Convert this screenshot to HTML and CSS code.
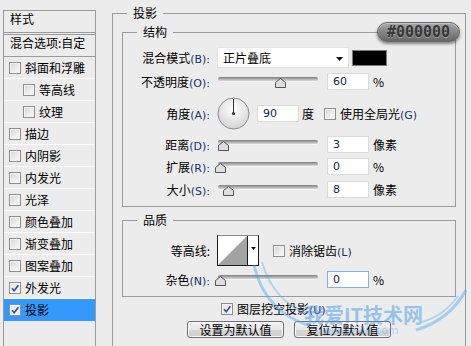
FILE: index.html
```html
<!DOCTYPE html>
<html lang="zh-CN">
<head>
<meta charset="utf-8">
<title>图层样式 - 投影</title>
<link rel="stylesheet" href="styles.css">
</head>
<body>
<div class="dialog">
  <aside class="styles">
    <div class="styles-head">样式</div>
    <div class="styles-blend">混合选项:自定</div>
    <ul class="fx-list">
      <li class="fx"><span class="cb"></span>斜面和浮雕</li>
      <li class="fx sub"><span class="cb"></span>等高线</li>
      <li class="fx sub"><span class="cb"></span>纹理</li>
      <li class="fx"><span class="cb"></span>描边</li>
      <li class="fx"><span class="cb"></span>内阴影</li>
      <li class="fx"><span class="cb"></span>内发光</li>
      <li class="fx"><span class="cb"></span>光泽</li>
      <li class="fx"><span class="cb"></span>颜色叠加</li>
      <li class="fx"><span class="cb"></span>渐变叠加</li>
      <li class="fx"><span class="cb"></span>图案叠加</li>
      <li class="fx"><span class="cb on"><svg viewBox="0 0 10 10" width="10" height="10"><path d="M2 5.2 L4.2 7.8 L8.4 2.2" fill="none" stroke="#2f4fa8" stroke-width="1.6"/></svg></span>外发光</li>
      <li class="fx sel"><span class="cb on"><svg viewBox="0 0 10 10" width="10" height="10"><path d="M2 5.2 L4.2 7.8 L8.4 2.2" fill="none" stroke="#2f4fa8" stroke-width="1.6"/></svg></span>投影</li>
    </ul>
  </aside>

  <section class="main">
    <fieldset class="group outer">
      <legend>投影</legend>

      <fieldset class="group inner">
        <legend>结构</legend>

        <div class="row r-blend">
          <span class="lbl">混合模式<span class="acc">(B):</span></span>
          <div class="select">正片叠底<svg class="sel-arrow" viewBox="0 0 7 4" width="7" height="4"><path d="M0 0 H7 L3.5 4 Z" fill="#111"/></svg></div>
          <span class="swatch"></span>
        </div>

        <div class="row r-gap5">
          <span class="lbl">不透明度<span class="acc">(O):</span></span>
          <div class="slider"><span class="track"></span><svg class="thumb" style="left:60px" viewBox="0 0 11 10" width="11" height="10"><path d="M0.5 9.5 V4.5 L5.5 0.5 L10.5 4.5 V9.5 Z" fill="#dedede" stroke="#555"/></svg></div>
          <input class="num" type="text" value="60">
          <span class="unit">%</span>
        </div>

        <div class="row r-angle">
          <span class="lbl">角度<span class="acc">(A):</span></span>
          <svg class="dial" viewBox="0 0 33 33" width="33" height="33">
            <defs><radialGradient id="dg" cx="50%" cy="35%" r="65%"><stop offset="0" stop-color="#ffffff"/><stop offset="1" stop-color="#d4d4d4"/></radialGradient></defs>
            <circle cx="16.5" cy="16.5" r="15.5" fill="url(#dg)" stroke="#8c8c8c"/>
            <line x1="16.5" y1="16.5" x2="16.5" y2="2" stroke="#333" stroke-width="1"/>
            <circle cx="16.5" cy="16.5" r="1.6" fill="#333"/>
          </svg>
          <input class="num" type="text" value="90">
          <span class="unit deg">度</span>
          <span class="cb global"></span>
          <span class="cb-text">使用全局光<span class="acc">(G)</span></span>
        </div>

        <div class="row r-gap6">
          <span class="lbl">距离<span class="acc">(D):</span></span>
          <div class="slider"><span class="track"></span><svg class="thumb" style="left:3px" viewBox="0 0 11 10" width="11" height="10"><path d="M0.5 9.5 V4.5 L5.5 0.5 L10.5 4.5 V9.5 Z" fill="#dedede" stroke="#555"/></svg></div>
          <input class="num" type="text" value="3">
          <span class="unit">像素</span>
        </div>

        <div class="row r-gap5">
          <span class="lbl">扩展<span class="acc">(R):</span></span>
          <div class="slider"><span class="track"></span><svg class="thumb" style="left:0px" viewBox="0 0 11 10" width="11" height="10"><path d="M0.5 9.5 V4.5 L5.5 0.5 L10.5 4.5 V9.5 Z" fill="#dedede" stroke="#555"/></svg></div>
          <input class="num" type="text" value="0">
          <span class="unit">%</span>
        </div>

        <div class="row r-gap6">
          <span class="lbl">大小<span class="acc">(S):</span></span>
          <div class="slider"><span class="track"></span><svg class="thumb" style="left:8px" viewBox="0 0 11 10" width="11" height="10"><path d="M0.5 9.5 V4.5 L5.5 0.5 L10.5 4.5 V9.5 Z" fill="#dedede" stroke="#555"/></svg></div>
          <input class="num" type="text" value="8">
          <span class="unit">像素</span>
        </div>
      </fieldset>

      <fieldset class="group inner quality">
        <legend>品质</legend>

        <div class="row r-contour">
          <span class="lbl">等高线:</span>
          <div class="contour">
            <svg class="curve" viewBox="0 0 29 29" width="29" height="29"><rect width="29" height="29" fill="#fff"/><path d="M0 29 L29 0 V29 Z" fill="#a3a3a3"/></svg>
            <span class="c-arrow"><svg viewBox="0 0 5 3" width="5" height="3"><path d="M0 0 H5 L2.5 3 Z" fill="#111"/></svg></span>
          </div>
          <span class="cb anti"></span>
          <span class="cb-text">消除锯齿<span class="acc">(L)</span></span>
        </div>

        <div class="row r-gap5">
          <span class="lbl">杂色<span class="acc">(N):</span></span>
          <div class="slider"><span class="track"></span><svg class="thumb" style="left:0px" viewBox="0 0 11 10" width="11" height="10"><path d="M0.5 9.5 V4.5 L5.5 0.5 L10.5 4.5 V9.5 Z" fill="#dedede" stroke="#555"/></svg></div>
          <input class="num focus" type="text" value="0">
          <span class="unit">%</span>
        </div>
      </fieldset>

      <div class="knockout">
        <span class="cb on"><svg viewBox="0 0 10 10" width="10" height="10"><path d="M2 5.2 L4.2 7.8 L8.4 2.2" fill="none" stroke="#2f4fa8" stroke-width="1.6"/></svg></span>
        <span class="cb-text">图层挖空投影<span class="acc">(U)</span></span>
      </div>

      <div class="buttons">
        <button class="btn" type="button">设置为默认值</button>
        <button class="btn" type="button">复位为默认值</button>
      </div>
    </fieldset>
  </section>

  <div class="badge">#000000</div>

  <div class="watermark">
    <svg class="wings" viewBox="0 0 231 126" width="231" height="126">
      <path d="M14 45 C22 80 45 98 70 106" fill="none" stroke="#4aa8ee" stroke-width="3" opacity="0.45"/>
      <path d="M22 42 C30 70 48 86 66 94" fill="none" stroke="#4aa8ee" stroke-width="2" opacity="0.35"/>
      <path d="M226 70 C214 92 196 104 176 110" fill="none" stroke="#4aa8ee" stroke-width="3" opacity="0.45"/>
      <path d="M218 76 C208 90 196 98 182 102" fill="none" stroke="#4aa8ee" stroke-width="2" opacity="0.35"/>
    </svg>
    <span class="wm-title">我爱IT技术网</span>
    <span class="wm-url">www.52ij.com</span>
  </div>
</div>
</body>
</html>
```

FILE: styles.css
```css
html, body {
  margin: 0;
  padding: 0;
}

body {
  background: #ececec;
  font-family: "Noto Sans CJK SC", "Noto Sans", sans-serif;
  font-size: 12px;
  color: #000;
}

.dialog {
  position: relative;
  display: flex;
  align-items: flex-start;
  width: 471px;
  height: 346px;
  overflow: hidden;
}

/* ---------- left style list ---------- */
.styles {
  flex: none;
  box-sizing: border-box;
  width: 93px;
  height: 345px;
  margin: 10px 0 0 3px;
  border: 1px solid #9b9b9b;
}

.styles-head {
  height: 21px;
  line-height: 15px;
  padding-left: 6px;
  border-bottom: 1px solid #9b9b9b;
}

.styles-blend {
  height: 21px;
  line-height: 15px;
  padding-left: 6px;
  margin-top: 1px;
  border-top: 1px solid #9b9b9b;
  border-bottom: 1px solid #9b9b9b;
  white-space: nowrap;
}

.fx-list {
  list-style: none;
  margin: 0;
  padding: 0;
}

.fx {
  display: flex;
  align-items: center;
  height: 21px;
  padding-left: 5px;
  border-bottom: 1px solid #fbfbfb;
  white-space: nowrap;
}

.fx .cb {
  margin-right: 4px;
}

.fx.sub {
  padding-left: 19px;
}

.fx.sel {
  background: #3399ff;
  border-bottom-color: #3399ff;
}

/* checkbox */
.cb {
  flex: none;
  display: inline-flex;
  align-items: center;
  justify-content: center;
  box-sizing: border-box;
  width: 12px;
  height: 12px;
  border: 1px solid #8f8f8f;
  background: linear-gradient(135deg, #d2d2d2 0%, #eeeeee 60%, #fbfbfb 100%);
  box-shadow: inset 0 0 0 1px #f4f4f4;
}

.cb.on {
  background: linear-gradient(135deg, #e4e4e4 0%, #f6f6f6 100%);
}

.cb svg {
  display: block;
}

/* ---------- right part ---------- */
.main {
  flex: none;
  margin-left: 16px;
}

.group {
  margin: 0;
  padding: 0;
  min-width: 0;
  border: 1px solid #9b9b9b;
  box-sizing: border-box;
}

.group > legend {
  padding: 0 6px;
  margin-left: 14px;
  line-height: 14px;
  height: 14px;
  font-size: 12px;
}

.outer {
  width: 354px;
  margin-top: 6px;
  padding-bottom: 40px;
}

.inner {
  width: 334px;
  margin: 5px 0 0 9px;
  padding: 8px 0 8px 0;
}

.inner.quality {
  margin-top: 6px;
}

.row {
  display: flex;
  align-items: center;
  white-space: nowrap;
}

.r-gap5 { margin-top: 5px; }
.r-gap6 { margin-top: 6px; }
.r-angle { margin-top: 7px; }

.lbl {
  flex: none;
  width: 87px;
  margin-right: 7px;
  text-align: right;
}

.acc {
  font-family: "DejaVu Sans", sans-serif;
  font-size: 11px;
  color: #1a2f6e;
}

.select {
  flex: none;
  position: relative;
  box-sizing: border-box;
  width: 132px;
  height: 21px;
  line-height: 19px;
  padding-left: 5px;
  background: #fff;
  border: 1px solid #e2e2e2;
}

.sel-arrow {
  position: absolute;
  right: 5px;
  top: 9px;
}

.swatch {
  flex: none;
  box-sizing: border-box;
  width: 35px;
  height: 16px;
  margin-left: 3px;
  background: #000;
  border: 1px solid #7a7a7a;
}

.slider {
  flex: none;
  position: relative;
  width: 105px;
  height: 17px;
  margin-left: -2px;
}

.track {
  display: block;
  width: 100px;
  height: 4px;
  margin: 4px 0 0 3px;
  border-radius: 2px;
  background: linear-gradient(#7d7d7d, #b5b5b5 60%, #d8d8d8);
  box-shadow: 0 1px 0 #f6f6f6;
}

.thumb {
  position: absolute;
  top: 5px;
  display: block;
}

.num {
  flex: none;
  box-sizing: border-box;
  width: 42px;
  height: 17px;
  margin: 0 0 0 7px;
  padding: 0 0 0 5px;
  border: 1px solid #dadada;
  background: #fff;
  font-family: "DejaVu Sans", sans-serif;
  font-size: 11px;
  color: #14244f;
  outline: none;
}

.num.focus {
  border-color: #7eb4ea;
}

.unit {
  margin-left: 4px;
}

.dial {
  flex: none;
  display: block;
}

.r-angle .num {
  margin-left: 7px;
}

.unit.deg {
  margin-left: 3px;
}

.cb.global {
  margin-left: 10px;
}

.cb-text {
  margin-left: 4px;
}

.contour {
  flex: none;
  display: flex;
  box-sizing: border-box;
  width: 42px;
  height: 31px;
  border: 1px solid #1a1a1a;
  border-top-color: #8a8a8a;
  background: #fff;
}

.curve {
  display: block;
}

.c-arrow {
  flex: 1;
  display: flex;
  align-items: center;
  justify-content: center;
  border-left: 1px solid #1a1a1a;
  padding-bottom: 4px;
}

.cb.anti {
  margin-left: 14px;
}

.knockout {
  display: flex;
  align-items: center;
  height: 15px;
  margin: 4px 0 0 108px;
  white-space: nowrap;
}

.buttons {
  display: flex;
  justify-content: center;
  gap: 10px;
  margin-top: 5px;
}

.btn {
  box-sizing: border-box;
  width: 97px;
  height: 17px;
  padding: 0;
  border: 1px solid #707070;
  border-radius: 3px;
  background: linear-gradient(#f4f4f4, #e6e6e6 50%, #d6d6d6 51%, #cfcfcf);
  box-shadow: inset 0 0 0 1px #fafafa;
  font-family: "Noto Sans CJK SC", "Noto Sans", sans-serif;
  font-size: 12px;
  line-height: 14px;
  color: #000;
}

/* ---------- overlays ---------- */
.badge {
  position: absolute;
  left: 377px;
  top: 22px;
  box-sizing: border-box;
  width: 83px;
  height: 20px;
  border-radius: 10px;
  background: linear-gradient(#a8a8a8, #8a8a8a 45%, #666 100%);
  box-shadow: 0 2px 3px rgba(0, 0, 0, 0.45), inset 0 1px 0 rgba(255, 255, 255, 0.35);
  border: 1px solid #6a6a6a;
  font-family: "DejaVu Sans Mono", monospace;
  font-weight: bold;
  font-size: 15px;
  line-height: 18px;
  text-align: center;
  color: #363636;
  text-shadow: 0 1px 0 rgba(255, 255, 255, 0.3);
}

.watermark {
  position: absolute;
  left: 240px;
  top: 220px;
  width: 231px;
  height: 126px;
  pointer-events: none;
}

.wings {
  position: absolute;
  left: 0;
  top: 0;
}

.wm-title {
  position: absolute;
  left: 64px;
  top: 80px;
  font-family: "Noto Sans CJK SC", sans-serif;
  font-weight: bold;
  font-size: 20px;
  letter-spacing: 0;
  color: rgba(74, 160, 235, 0.55);
  white-space: nowrap;
}

.wm-url {
  position: absolute;
  left: 82px;
  top: 104px;
  font-family: "DejaVu Sans", sans-serif;
  font-size: 11px;
  color: rgba(74, 160, 235, 0.4);
  white-space: nowrap;
}
```
